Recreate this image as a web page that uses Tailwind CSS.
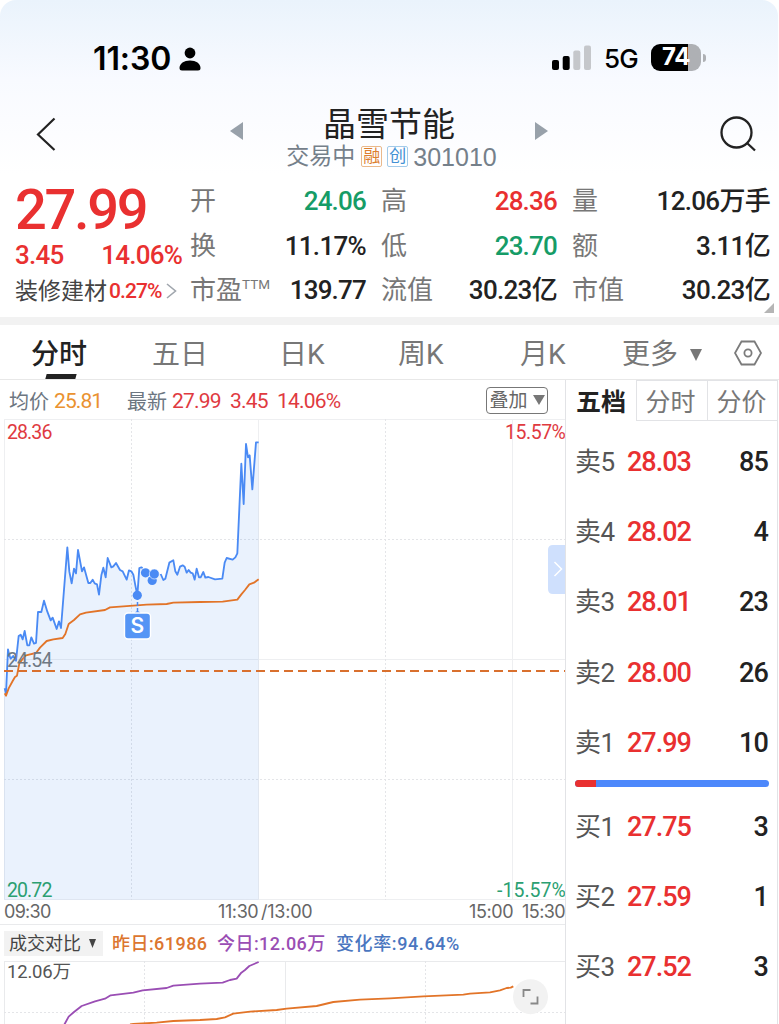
<!DOCTYPE html>
<html lang="zh-CN">
<head>
    <meta charset="UTF-8">
    <meta name="viewport" content="width=device-width, initial-scale=1.0">
    <title>晶雪节能 301010</title>
    <script src="https://cdn.jsdelivr.net/npm/@tailwindcss/browser@4"></script>
</head>
<body class="bg-white text-[#222] font-['Roboto','Noto_Sans_CJK_SC',sans-serif]">

    <div id="app" class="w-[779px] h-[1024px] overflow-hidden flex flex-col">

        <!-- Header -->
        <header class="w-[778px] h-[317px] shrink-0 rounded-t-2xl bg-linear-to-b from-[#eaf3fc] via-[#f8faff] via-25% to-white to-55% flex flex-col">

            <!-- Status bar -->
            <div class="h-[86px] pt-[31px] flex items-center font-['Inter',sans-serif] text-black">
                <span class="ml-[93px] w-[79px] text-[32px] leading-none font-semibold tracking-[-0.1px] whitespace-nowrap">11:30</span>
                <svg class="ml-[7px] w-[22px] h-[24px]" viewBox="0 0 22 24"><circle cx="11" cy="6" r="5.4"/><path d="M0.5 21C0.5 16.500 5 13.500 11 13.500S21.500 16.500 21.500 21Q21.500 23.500 19 23.500H3Q0.500 23.500 0.500 21Z"/></svg>
                <svg class="ml-[351px] -mt-[3px] w-[40px] h-[26px]" viewBox="0 0 40 26">
                    <rect x="0" y="16" width="7" height="10" rx="2"/>
                    <rect x="10.700" y="12" width="7" height="14" rx="2"/>
                    <rect x="21.300" y="6.500" width="7" height="19.500" rx="2" fill="#c5c7cb"/>
                    <rect x="32" y="1.500" width="7" height="24.500" rx="2" fill="#c5c7cb"/>
                </svg>
                <span class="ml-[12px] w-[36px] text-[26px] leading-none font-medium tracking-[-0.8px]">5G</span>
                <div class="ml-[11px] -mt-[3px] w-[50px] h-[27px] rounded-[9px] bg-linear-to-r from-black from-74% to-[#aeb0b4] to-74% flex items-center justify-center text-[24px] leading-none font-bold text-white tracking-[-0.5px]">74</div>
                <div class="ml-[2px] -mt-[2px] w-[3px] h-[8px] rounded-r-full bg-[#aeb0b4]"></div>
            </div>

            <!-- Stock title -->
            <div class="h-[88px] flex items-center">
                <svg class="ml-[36px] mt-[8px] w-[20px] h-[34px]" viewBox="0 0 20 34" fill="none" stroke="#222" stroke-width="2.200"><path d="M18.500 1.500L2 17.500L18.500 33"/></svg>
                <svg class="ml-[174px] mt-[2px] w-[13px] h-[18px]" viewBox="0 0 13 18" fill="#98a1aa"><path d="M13 0V18L0 9Z"/></svg>
                <div class="ml-[32px] mt-[16px] w-[234px] flex flex-col items-center">
                    <h1 class="-ml-[6px] text-[33px] leading-[38px] whitespace-nowrap">晶雪节能</h1>
                    <div class="h-[26px] -ml-[1px] flex items-center whitespace-nowrap text-[#75808a]">
                        <span class="text-[23px] leading-[26px]">交易中</span>
                        <span class="ml-[6px] -mt-[1px] size-[21px] border border-[#eab98c] rounded-[2px] text-[17px] leading-[19px] text-center text-[#dd7f2e]">融</span>
                        <span class="ml-[5px] -mt-[1px] size-[21px] border border-[#a3cbea] rounded-[2px] text-[17px] leading-[19px] text-center text-[#4391d4]">创</span>
                        <span class="ml-[5px] text-[25px] leading-[26px] font-['Liberation_Sans',sans-serif]">301010</span>
                    </div>
                </div>
                <svg class="ml-[26px] mt-[2px] w-[13px] h-[18px]" viewBox="0 0 13 18" fill="#98a1aa"><path d="M0 0V18L13 9Z"/></svg>
                <svg class="ml-[172px] mt-[8px] w-[36px] h-[36px]" viewBox="0 0 36 36" fill="none" stroke="#222" stroke-width="2.300"><circle cx="16.500" cy="16.500" r="15"/><path d="M27 27L35 34.500"/></svg>
            </div>

            <!-- Quote -->
            <div class="h-[143px] pl-[15px] flex relative">
                <div class="w-[167px] pt-[10px] text-[#e93030] whitespace-nowrap">
                    <div class="text-[56px] leading-[52px] h-[53px] font-medium tracking-[-2.3px]">27.99</div>
                    <div class="h-[36px] flex justify-between items-center text-[26px] leading-none font-medium tracking-[-0.8px]">
                        <span>3.45</span><span>14.06%</span>
                    </div>
                    <div class="h-[36px] flex items-center">
                        <span class="text-[23px] leading-none text-[#444]">装修建材</span>
                        <span class="ml-[2px] w-[54px] text-[21px] leading-none font-medium tracking-[-0.9px]">0.27%</span>
                        <svg class="ml-[3px] w-[11px] h-[16px]" viewBox="0 0 11 16" fill="none" stroke="#a0a6ad" stroke-width="1.600"><path d="M1 1L9.500 8L1 15"/></svg>
                    </div>
                </div>
                <dl class="ml-[8px] w-[176px] pt-[5px] text-[26px] leading-[44.500px] whitespace-nowrap">
                    <div class="flex justify-between"><dt class="text-[#777]">开</dt><dd class="font-medium tracking-[-0.800px] text-[#169c67]">24.06</dd></div>
                    <div class="flex justify-between"><dt class="text-[#777]">换</dt><dd class="font-medium tracking-[-0.700px]">11.17%</dd></div>
                    <div class="flex justify-between"><dt class="text-[#777] flex">市盈<span class="text-[13.500px] leading-[32px]">TTM</span></dt><dd class="font-medium tracking-[-0.800px]">139.77</dd></div>
                </dl>
                <dl class="ml-[15px] w-[176px] pt-[5px] text-[26px] leading-[44.500px] whitespace-nowrap">
                    <div class="flex justify-between"><dt class="text-[#777]">高</dt><dd class="font-medium tracking-[-0.800px] text-[#e93030]">28.36</dd></div>
                    <div class="flex justify-between"><dt class="text-[#777]">低</dt><dd class="font-medium tracking-[-0.800px] text-[#169c67]">23.70</dd></div>
                    <div class="flex justify-between"><dt class="text-[#777]">流值</dt><dd class="font-medium tracking-[-0.700px]">30.23亿</dd></div>
                </dl>
                <dl class="ml-[15px] w-[198px] pt-[5px] text-[26px] leading-[44.500px] whitespace-nowrap">
                    <div class="flex justify-between"><dt class="text-[#777]">量</dt><dd class="font-medium tracking-[-0.700px]">12.06万手</dd></div>
                    <div class="flex justify-between"><dt class="text-[#777]">额</dt><dd class="font-medium tracking-[-0.700px]">3.11亿</dd></div>
                    <div class="flex justify-between"><dt class="text-[#777]">市值</dt><dd class="font-medium tracking-[-0.700px]">30.23亿</dd></div>
                </dl>
                <svg class="absolute right-[4px] bottom-[4px] w-[10px] h-[10px]" viewBox="0 0 10 10" fill="#b5b5b5"><path d="M10 0V10H0Z"/></svg>
            </div>
        </header>

        <div class="h-2 shrink-0 bg-[#f2f2f2]"></div>

        <!-- Period tabs -->
        <nav class="h-[55px] shrink-0 border-b border-[#e8e8e8] flex items-center text-[28px] leading-[54px] text-[#777] whitespace-nowrap">
            <div class="relative ml-[31px] w-[121px] pt-[3px] h-[54px] font-medium text-[#222]">分时<span class="absolute left-[15px] bottom-0 w-[30px] h-[5px] bg-[#222] -skew-x-[15deg]"></span></div>
            <div class="w-[127px] pt-[6px]">五日</div>
            <div class="w-[119px] pt-[6px]">日K</div>
            <div class="w-[122px] pt-[6px]">周K</div>
            <div class="w-[102px] pt-[6px]">月K</div>
            <div class="w-[68px] pt-[6px]">更多</div>
            <svg class="mt-[6px] w-[12px] h-[12px]" viewBox="0 0 12 12" fill="#777"><path d="M0 0H12L6 12Z"/></svg>
            <svg class="ml-[32px] mt-[2px] w-[28px] h-[26px]" viewBox="0 0 28 26" fill="none" stroke="#7b7b7b" stroke-width="1.800"><path d="M7.500 1.500H20.500L27 13L20.500 24.500H7.500L1 13Z"/><circle cx="14" cy="13" r="3.600"/></svg>
        </nav>

        <main class="flex-1 flex">
            <!-- Charts -->
            <section class="w-[565px] shrink-0">
                <div class="h-[39px] pl-[9px] pr-[17px] pt-[4px] flex items-center text-[21px] leading-none text-[#e03a3f] whitespace-nowrap">
                    <span class="text-[20px] text-[#6c7681]">均价</span>
                    <span class="ml-[5px] w-[73px] tracking-[-0.900px] text-[#ea9230]">25.81</span>
                    <span class="text-[20px] text-[#6c7681]">最新</span>
                    <span class="ml-[5px] w-[58px] tracking-[-0.800px]">27.99</span>
                    <span class="w-[47px] tracking-[-0.800px]">3.45</span>
                    <span class="tracking-[-0.800px]">14.06%</span>
                    <button class="ml-auto -mt-[3px] w-[62px] h-[27px] border-[1.500px] border-[#777] rounded-[4px] flex items-center justify-center gap-[5px] text-[19px] text-[#666]">叠加<svg class="w-[12px] h-[10px]" viewBox="0 0 12 10" fill="#777"><path d="M0 0H12L6 10Z"/></svg></button>
                </div>

                <!-- Intraday price -->
                <svg class="block w-[565px] h-[505px]" viewBox="0 419 565 505" fill="none">
                    <g stroke="#eeeff1">
                        <path d="M4 419.500H566M4 659.500H566M4 899.500H566M4.500 419V900M258.500 419V900M512.500 419V900"/>
                        <path stroke-dasharray="2 2" stroke="#e4e5e8" d="M4 539.500H566M4 779.500H566M131.500 419V900M385.500 419V900"/>
                    </g>
                    <g transform="translate(0 430) scale(.33333)" stroke-width="5.500" stroke-linejoin="round">
                        <path fill="#2f7bea" fill-opacity=".1" d="M12 1409V775L18 790L24 658L28 676L32 686L40 678L48 692L56 618L62 614L68 628L74 603L82 646L88 646L94 622L102 641L108 639L114 546L124 546L132 512L142 545L152 571L158 563L170 597L177 574L183 594L202 352L208 425L215 460L222 416L228 430L234 360L246 424L252 412L265 459L271 459L278 449L284 460L291 463L297 494L304 436L310 413L317 442L323 384L334 412L340 409L348 399L360 420L368 424L380 449L387 421L394 424L400 434L406 466L412 496L418 414L424 412L436 428L456 450L464 430L482 432L490 450L496 446L508 398L520 391L526 424L532 434L540 410L548 406L554 410L560 428L566 420L572 428L578 430L584 449L590 416L597 442L602 442L610 426L616 443L625 441L645 448L667 446L674 398L680 384L698 389L706 382L712 370L724 101L731 222L738 42L744 82L749 76L757 178L768 37L776 37V1409Z"/>
                        <path stroke="#4a8af4" d="M14 775L18 790L24 658L28 676L32 686L40 678L48 692L56 618L62 614L68 628L74 603L82 646L88 646L94 622L102 641L108 639L114 546L124 546L132 512L142 545L152 571L158 563L170 597L177 574L183 594L202 352L208 425L215 460L222 416L228 430L234 360L246 424L252 412L265 459L271 459L278 449L284 460L291 463L297 494L304 436L310 413L317 442L323 384L334 412L340 409L348 399L360 420L368 424L380 449L387 421L394 424L400 434L406 466L412 496L418 414L424 412L428 414M482 432L490 450L496 446L508 398L520 391L526 424L532 434L540 410L548 406L554 410L560 428L566 420L572 428L578 430L584 449L590 416L597 442L602 442L610 426L616 443L625 441L645 448L667 446L674 398L680 384L698 389L706 382L712 370L724 101L731 222L738 42L744 82L749 76L757 178L768 37L776 37"/>
                        <path stroke="#e27428" d="M14 790L18 797L26 775L38 753L45 741L51 737L58 700L68 687L76 677L90 673L108 669L120 653L140 633L160 628L188 624L196 612L206 582L222 570L240 553L258 548L315 540L330 532L370 529L400 527L440 524L500 522L520 518L600 516L668 515L712 509L724 493L735 480L748 463L762 458L776 448"/>
                    </g>
                    <path stroke="#d9702e" stroke-width="2" stroke-dasharray="9 5" d="M4 671H566"/>
                    <g fill="#4a8af4">
                        <path stroke="#4a8af4" stroke-width="1.500" stroke-dasharray="4 2" d="M137.500 596V614"/>
                        <circle cx="137.300" cy="595.300" r="4.600"/>
                        <circle cx="145.500" cy="572.800" r="4.600"/>
                        <circle cx="152.200" cy="580.500" r="4.600"/>
                        <circle cx="154.300" cy="574" r="5" stroke="#fff" stroke-width=".6"/>
                        <path d="M134 613.500Q137.500 608.500 141 613.500Z"/>
                        <rect x="124.500" y="613" width="26" height="26" rx="3.500" fill="#5595f5" stroke="#fff" stroke-width="1.400"/>
                    </g>
                    <text x="137.300" y="633" text-anchor="middle" class="font-['Inter',sans-serif] text-[21px] font-semibold" fill="#fff">S</text>
                    <g class="text-[19.500px] tracking-[-0.900px]">
                        <text x="7" y="438.500" fill="#e03a3f">28.36</text>
                        <text x="505" y="438.500" textLength="60" fill="#e03a3f">15.57%</text>
                        <text x="7" y="667" fill="#6f7984">24.54</text>
                        <text x="7" y="897" fill="#2b9f72">20.72</text>
                        <text x="497" y="897" textLength="68" fill="#2b9f72">-15.57%</text>
                    </g>
                    <g class="text-[18px] font-['Inter',sans-serif] tracking-[-0.700px]" fill="#666">
                        <text x="4" y="917.500">09:30</text>
                        <text x="218" y="917.500" textLength="40">11:30</text>
                        <text x="261" y="917.500" textLength="51">/13:00</text>
                        <text x="469" y="917.500" textLength="44">15:00</text>
                        <text x="522" y="917.500" textLength="43">15:30</text>
                    </g>
                    <path fill="#cfe0fd" d="M566 545H553Q548 545 548 550V589Q548 594 553 594H566Z"/>
                    <path stroke="#fff" stroke-width="1.500" d="M554.500 562L561.500 569L554.500 576"/>
                </svg>

                <!-- Volume comparison -->
                <div class="h-[37px] border-t border-[#e9eaec] pl-[4px] flex items-center text-[18px] leading-none font-medium whitespace-nowrap">
                    <div class="w-[99px] h-[25px] bg-[#f2f2f2] pl-[5px] pt-px flex items-center gap-[8px] font-normal text-[#444]">成交对比<svg class="w-[7px] h-[9px]" viewBox="0 0 7 9" fill="#444"><path d="M0 0H7L3.500 9Z"/></svg></div>
                    <span class="ml-[9px] mt-px w-[105px] text-[#dc7630] tracking-[0.450px]">昨日:61986</span>
                    <span class="w-[119px] mt-px text-[#9a4eb4] tracking-[0.450px]">今日:12.06万</span>
                    <span class="mt-px text-[#4a76bf] tracking-[0.600px]">变化率:94.64%</span>
                </div>
                <svg class="block w-[565px] h-[63px]" viewBox="0 961 565 63" fill="none">
                    <path stroke="#e9eaec" d="M4 961.500H566M4.500 961V1024M285.500 961V1024"/>
                    <path stroke="#e4e5e8" stroke-dasharray="2 2" d="M4 1012.500H566M144.500 961V1024M425.500 961V1024"/>
                    <g transform="translate(0 860) scale(.33333)" stroke-width="5.500" stroke-linejoin="round">
                        <path stroke="#9a4eb4" d="M190 500L194 492L206 470L222 456L245 438L285 424L315 416L332 406L400 398L428 391L500 384L520 377L600 371L668 368L690 360L710 356L724 338L735 330L748 318L762 312L776 306"/>
                        <path stroke="#e27428" d="M390 493L400 492L470 488L520 483L600 480L650 477L675 472L700 461L750 455L830 450L860 446L950 438L1000 426L1080 419L1170 415L1270 409L1390 404L1410 401L1470 397L1500 391L1520 384L1532 383L1540 379"/>
                    </g>
                    <text x="7" y="978" class="text-[18.500px] tracking-[-0.200px]" fill="#555">12.06万</text>
                    <circle cx="530.500" cy="996.700" r="17.500" fill="#f2f2f2"/>
                    <path stroke="#888" stroke-width="1.800" d="M523.500 997V990H530.500M530.500 1003.500H537.500V996.500"/>
                </svg>
            </section>

            <!-- Order book -->
            <aside class="w-[213px] border-x border-[#e2e3e6] flex flex-col">
                <div class="h-[41px] flex text-[25px] leading-[43px] text-[#777] text-center whitespace-nowrap">
                    <div class="w-[70px] pt-px font-bold text-[#222]">五档</div>
                    <div class="w-[71px] pr-[3px] border-l border-b border-t border-[#e2e3e6]">分时</div>
                    <div class="w-[70px] pr-[2px] border-l border-b border-t border-[#e2e3e6]">分价</div>
                </div>
                <div class="pl-[9px] pr-[9px] pt-[6px] flex flex-col text-[27px] leading-[70.200px] whitespace-nowrap">
                    <div class="flex"><span class="w-[52px] text-[26px] text-[#555] tracking-[-0.500px]">卖5</span><span class="font-medium tracking-[-1px] text-[#e93030]">28.03</span><span class="ml-auto font-medium tracking-[-0.800px]">85</span></div>
                    <div class="flex"><span class="w-[52px] text-[26px] text-[#555] tracking-[-0.500px]">卖4</span><span class="font-medium tracking-[-1px] text-[#e93030]">28.02</span><span class="ml-auto font-medium tracking-[-0.800px]">4</span></div>
                    <div class="flex"><span class="w-[52px] text-[26px] text-[#555] tracking-[-0.500px]">卖3</span><span class="font-medium tracking-[-1px] text-[#e93030]">28.01</span><span class="ml-auto font-medium tracking-[-0.800px]">23</span></div>
                    <div class="flex"><span class="w-[52px] text-[26px] text-[#555] tracking-[-0.500px]">卖2</span><span class="font-medium tracking-[-1px] text-[#e93030]">28.00</span><span class="ml-auto font-medium tracking-[-0.800px]">26</span></div>
                    <div class="flex"><span class="w-[52px] text-[26px] text-[#555] tracking-[-0.500px]">卖1</span><span class="font-medium tracking-[-1px] text-[#e93030]">27.99</span><span class="ml-auto font-medium tracking-[-0.800px]">10</span></div>
                </div>
                <div class="ml-[9px] mr-[8px] mt-[2px] h-[7px] shrink-0 rounded-full overflow-hidden flex bg-[#4d88fb]"><div class="bg-[#e93030]" style="width:11%"></div></div>
                <div class="pl-[9px] pr-[9px] pt-[5px] flex flex-col text-[27px] leading-[70.200px] whitespace-nowrap">
                    <div class="flex"><span class="w-[52px] text-[26px] text-[#555] tracking-[-0.500px]">买1</span><span class="font-medium tracking-[-1px] text-[#e93030]">27.75</span><span class="ml-auto font-medium tracking-[-0.800px]">3</span></div>
                    <div class="flex"><span class="w-[52px] text-[26px] text-[#555] tracking-[-0.500px]">买2</span><span class="font-medium tracking-[-1px] text-[#e93030]">27.59</span><span class="ml-auto font-medium tracking-[-0.800px]">1</span></div>
                    <div class="flex"><span class="w-[52px] text-[26px] text-[#555] tracking-[-0.500px]">买3</span><span class="font-medium tracking-[-1px] text-[#e93030]">27.52</span><span class="ml-auto font-medium tracking-[-0.800px]">3</span></div>
                </div>
            </aside>
        </main>
    </div>

</body>
</html>
